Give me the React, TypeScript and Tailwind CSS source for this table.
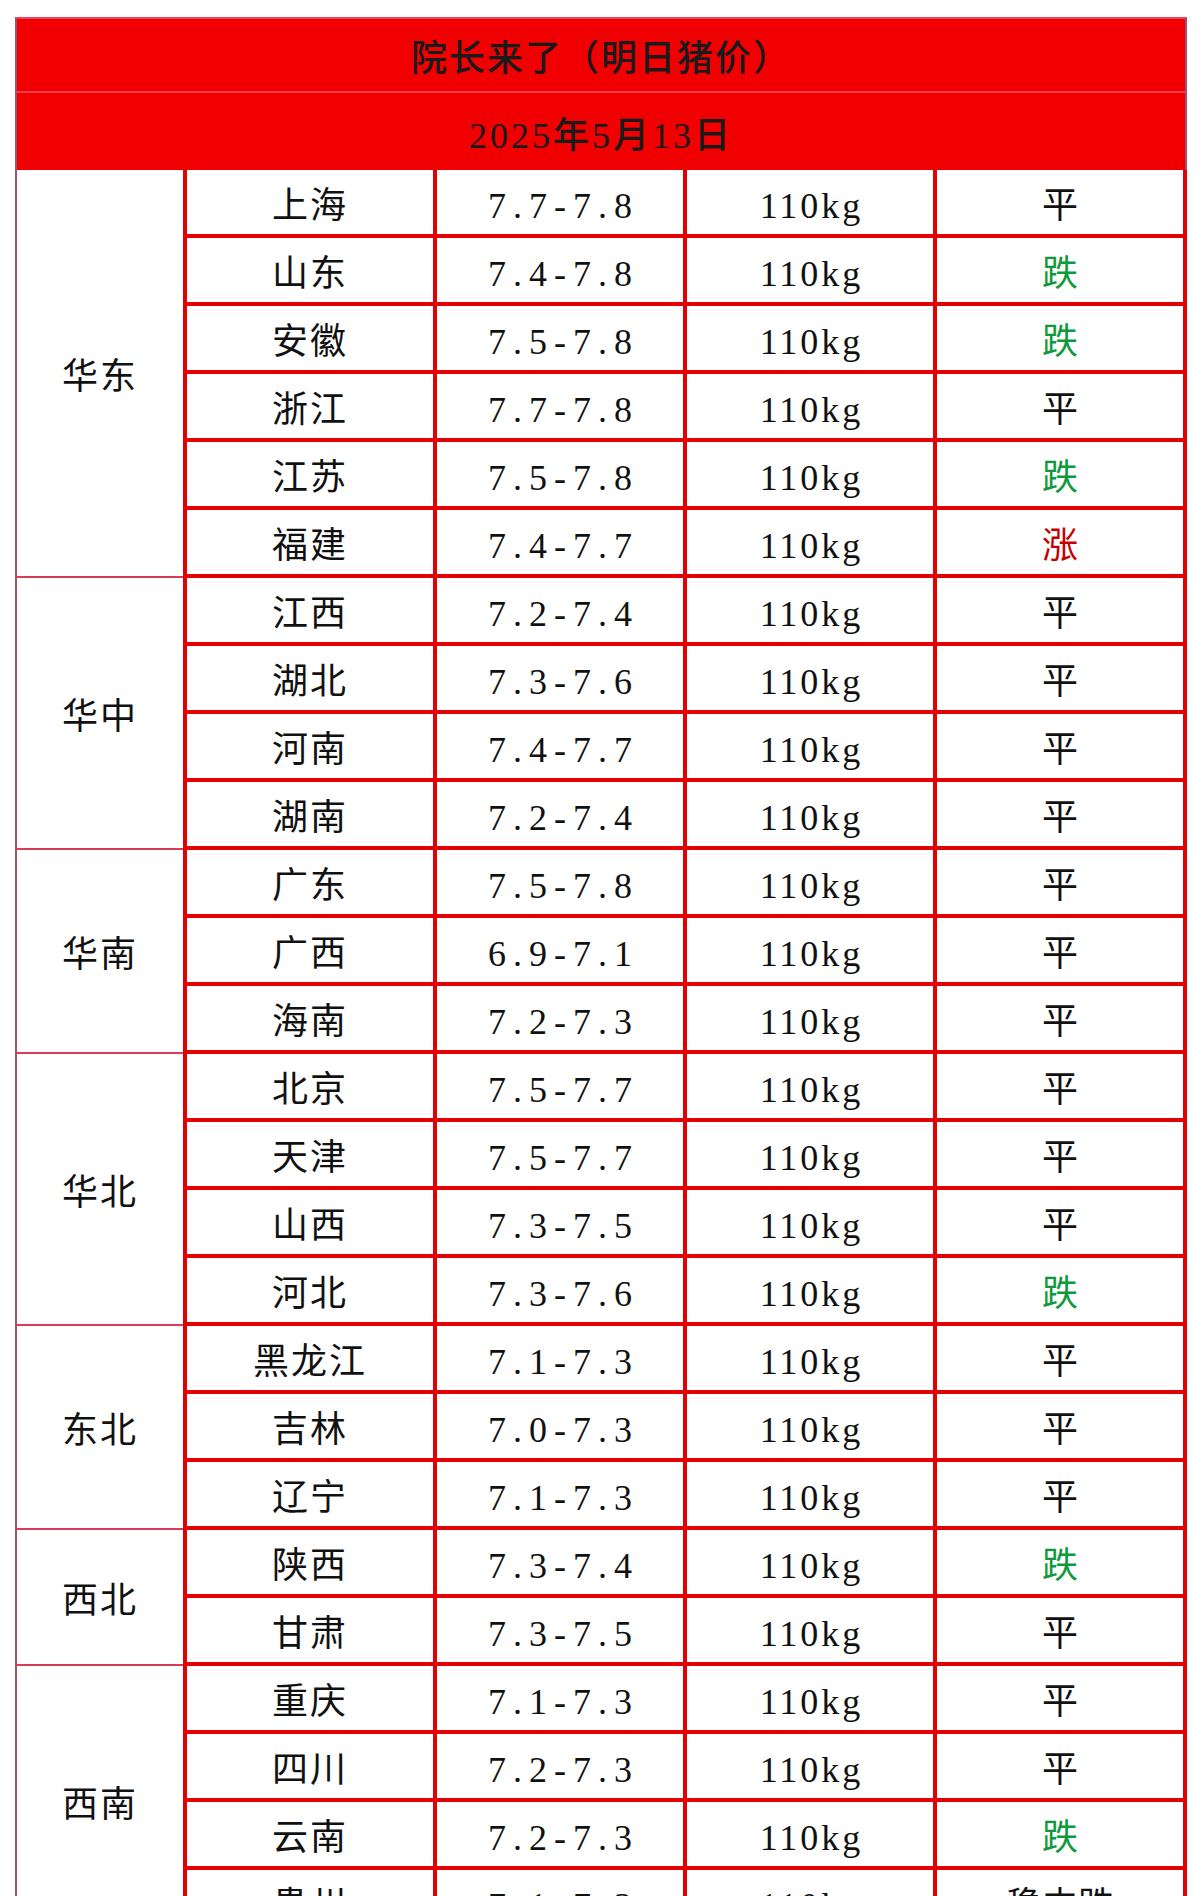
const rows = [
  { region: "华东", items: [
    ["上海", "7.7-7.8", "平"],
    ["山东", "7.4-7.8", "跌"],
    ["安徽", "7.5-7.8", "跌"],
    ["浙江", "7.7-7.8", "平"],
    ["江苏", "7.5-7.8", "跌"],
    ["福建", "7.4-7.7", "涨"],
  ] },
  { region: "华中", items: [
    ["江西", "7.2-7.4", "平"],
    ["湖北", "7.3-7.6", "平"],
    ["河南", "7.4-7.7", "平"],
    ["湖南", "7.2-7.4", "平"],
  ] },
  { region: "华南", items: [
    ["广东", "7.5-7.8", "平"],
    ["广西", "6.9-7.1", "平"],
    ["海南", "7.2-7.3", "平"],
  ] },
  { region: "华北", items: [
    ["北京", "7.5-7.7", "平"],
    ["天津", "7.5-7.7", "平"],
    ["山西", "7.3-7.5", "平"],
    ["河北", "7.3-7.6", "跌"],
  ] },
  { region: "东北", items: [
    ["黑龙江", "7.1-7.3", "平"],
    ["吉林", "7.0-7.3", "平"],
    ["辽宁", "7.1-7.3", "平"],
  ] },
  { region: "西北", items: [
    ["陕西", "7.3-7.4", "跌"],
    ["甘肃", "7.3-7.5", "平"],
  ] },
  { region: "西南", items: [
    ["重庆", "7.1-7.3", "平"],
    ["四川", "7.2-7.3", "平"],
    ["云南", "7.2-7.3", "跌"],
    ["贵州", "7.1-7.3", "稳中跌"],
  ] },
];

const spanClass: Record<number, string> = {
  2: "row-span-2",
  3: "row-span-3",
  4: "row-span-4",
  6: "row-span-6",
};

function trendColor(t: string) {
  if (t === "跌") return "text-[#0f9a3c]";
  if (t === "涨") return "text-[#c40000]";
  return "text-[#111]";
}

const cell =
  "h-[68px] flex items-center justify-center pt-[8px] border-b-4 border-r-4 border-[#e20000]";

export default function App() {
  return (
    <div className="min-h-[1896px] bg-white pl-[15px] pt-[17px] font-['Liberation_Serif','Noto_Sans_CJK_SC',serif] text-[36px] text-[#111]">
      <div className="w-[1172px]">
        <div className="h-[76px] bg-[#f00000] border-t-2 border-l-2 border-r-2 border-b-2 border-t-[#e8485e] border-l-[#a0506e] border-r-[#a0506e] border-b-[#f23a4a] flex items-center justify-center pt-2 font-medium tracking-[2px] text-[#1a1a1a]">
          院长来了（明日猪价）
        </div>
        <div className="h-[77px] bg-[#f00000] border-l-2 border-r-2 border-[#a0506e] flex items-center justify-center pt-2 font-medium tracking-[3px] text-[#1a1a1a]">
          2025年5月13日
        </div>
        <div className="grid grid-cols-[168px_254px_250px_250px_250px]">
          {rows.map((g) => [
            <div
              key={g.region}
              className={`${spanClass[g.items.length]} flex items-center justify-center pt-[8px] border-l-2 border-b-2 border-l-[#a0506e] border-b-[#d63c58] tracking-[2px]`}
            >
              {g.region}
            </div>,
            ...g.items.map(([name, range, trend]) => [
              <div key={name + "n"} className={`${cell} border-l-4 tracking-[2px]`}>
                {name}
              </div>,
              <div key={name + "r"} className={`${cell} tracking-[7px] pl-[7px]`}>
                {range}
              </div>,
              <div key={name + "w"} className={`${cell} tracking-[3px] pl-[3px]`}>
                110kg
              </div>,
              <div key={name + "t"} className={`${cell} ${trendColor(trend)}`}>
                {trend}
              </div>,
            ]),
          ])}
        </div>
      </div>
    </div>
  );
}
